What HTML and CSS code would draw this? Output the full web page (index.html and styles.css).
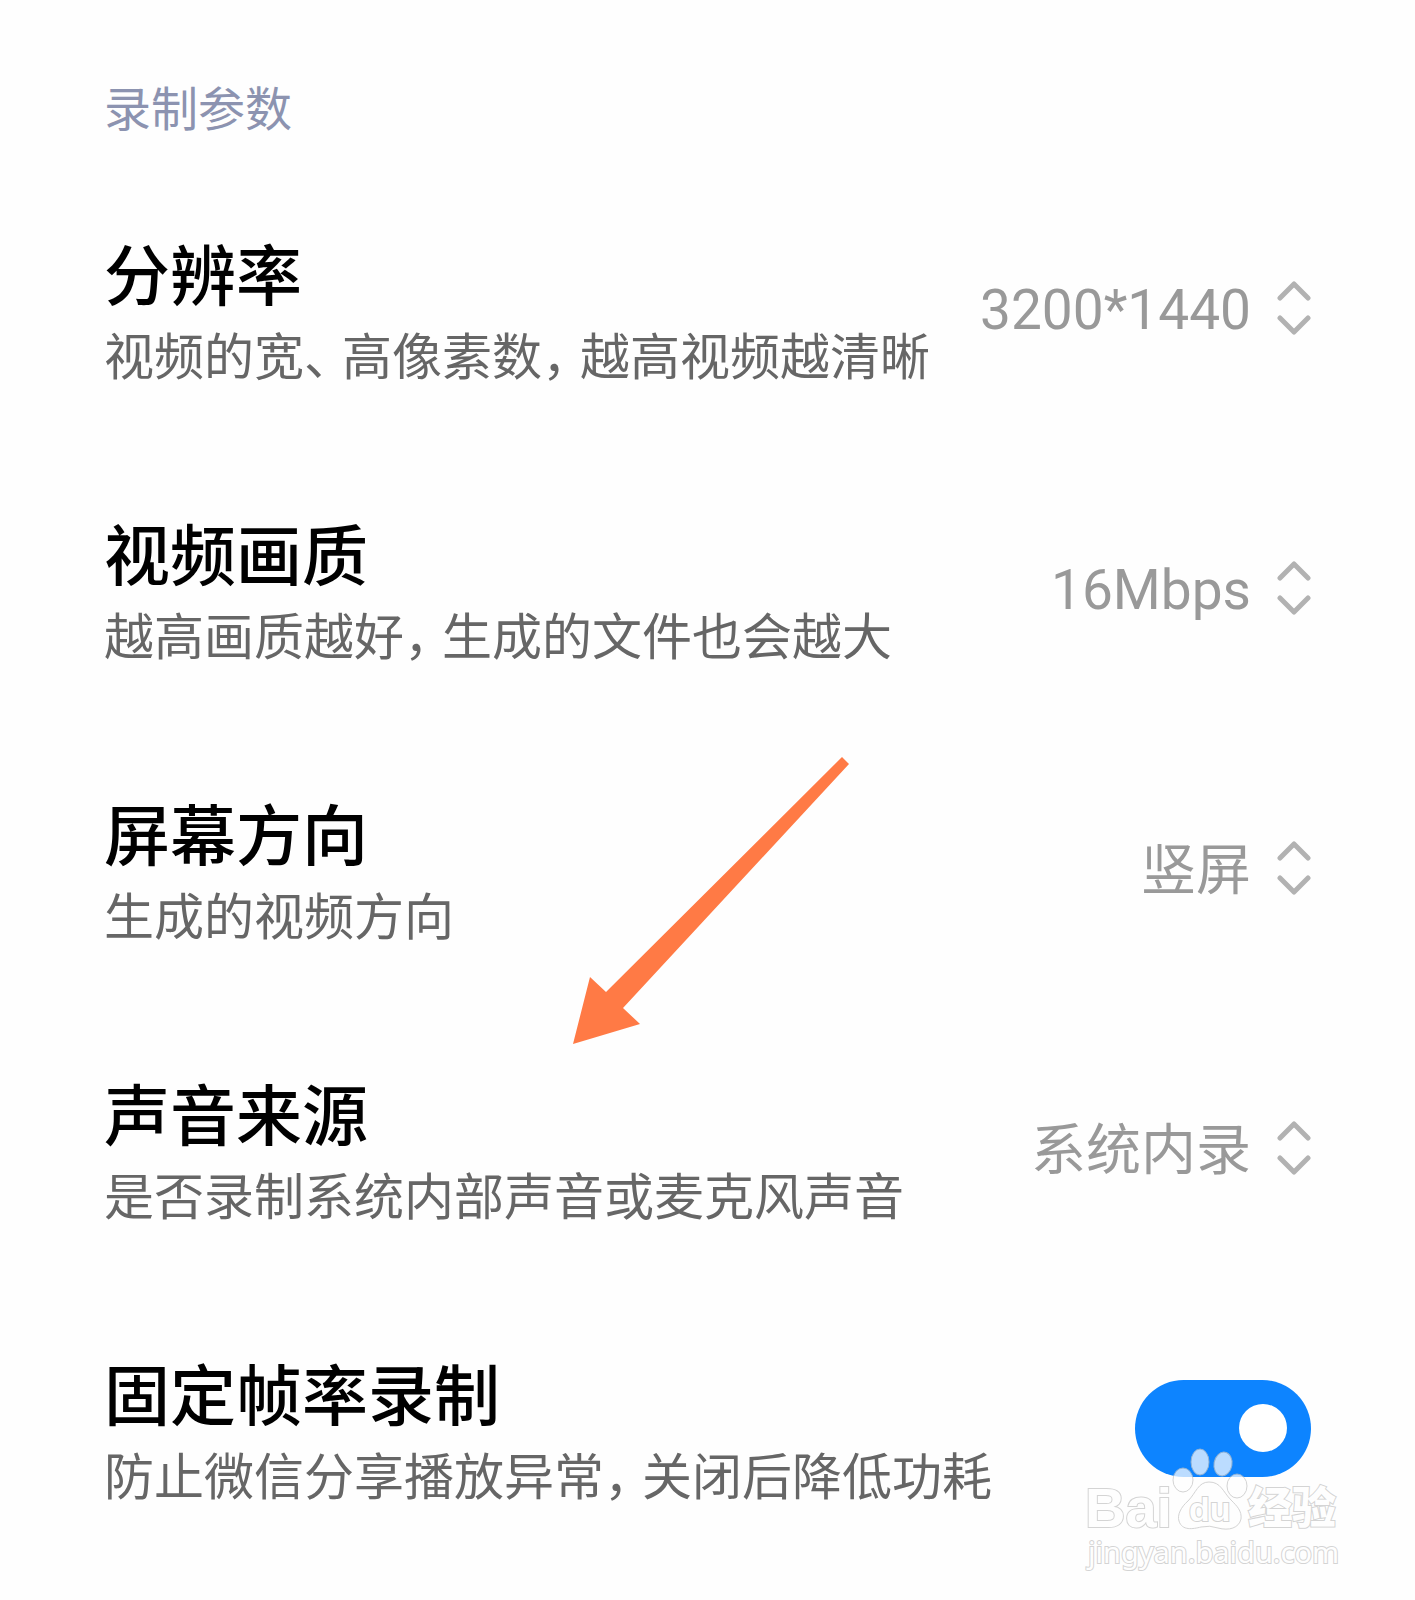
FILE: index.html
```
<!DOCTYPE html>
<html lang="zh-CN">
<head>
    <meta charset="UTF-8">
    <meta name="viewport" content="width=device-width, initial-scale=1.0">
    <title>录制参数</title>
    <link rel="stylesheet" href="styles.css">
</head>
<body>
    <svg width="0" height="0" class="defs" aria-hidden="true">
        <symbol id="icon-updown" viewBox="0 0 34 54">
            <path d="M3 17 17 3 31 17M3 37 17 51 31 37"/>
        </symbol>
    </svg>

    <main class="page">
        <h1 class="section-title">录制参数</h1>

        <!-- 分辨率 -->
        <div class="row">
            <div class="row-text">
                <label class="row-title" for="resolution">分辨率</label>
                <p class="row-desc">视频的宽<span class="punct">、</span>高像素数<span class="punct">，</span>越高视频越清晰</p>
            </div>
            <div class="picker">
                <select id="resolution">
                    <option>3200*1440</option>
                </select>
                <svg class="picker-icon"><use href="#icon-updown"/></svg>
            </div>
        </div>

        <!-- 视频画质 -->
        <div class="row">
            <div class="row-text">
                <label class="row-title" for="quality">视频画质</label>
                <p class="row-desc">越高画质越好<span class="punct">，</span>生成的文件也会越大</p>
            </div>
            <div class="picker">
                <select id="quality">
                    <option>16Mbps</option>
                </select>
                <svg class="picker-icon"><use href="#icon-updown"/></svg>
            </div>
        </div>

        <!-- 屏幕方向 -->
        <div class="row">
            <div class="row-text">
                <label class="row-title" for="orientation">屏幕方向</label>
                <p class="row-desc">生成的视频方向</p>
            </div>
            <div class="picker">
                <select id="orientation">
                    <option>竖屏</option>
                </select>
                <svg class="picker-icon"><use href="#icon-updown"/></svg>
            </div>
        </div>

        <!-- 声音来源 -->
        <div class="row">
            <div class="row-text">
                <label class="row-title" for="audio">声音来源</label>
                <p class="row-desc">是否录制系统内部声音或麦克风声音</p>
            </div>
            <div class="picker">
                <select id="audio">
                    <option>系统内录</option>
                </select>
                <svg class="picker-icon"><use href="#icon-updown"/></svg>
            </div>
        </div>

        <!-- 固定帧率录制 -->
        <div class="row">
            <div class="row-text">
                <label class="row-title" for="fixed-fps">固定帧率录制</label>
                <p class="row-desc">防止微信分享播放异常<span class="punct">，</span>关闭后降低功耗</p>
            </div>
            <input class="switch" type="checkbox" role="switch" id="fixed-fps" checked>
        </div>

        <!-- 指示箭头 -->
        <svg class="arrow" viewBox="0 0 276 288" aria-hidden="true">
            <path d="M0 287 17 220 33 235 269 0 276 7 50 251 67 267Z"/>
        </svg>

        <!-- 水印 -->
        <svg class="watermark" viewBox="0 0 265 130" role="img" aria-label="Baidu经验">
            <ellipse cx="120" cy="17" rx="9" ry="13"/>
            <ellipse cx="143" cy="19" rx="9" ry="12" transform="rotate(10 143 19)"/>
            <ellipse cx="103" cy="35" rx="10" ry="12"/>
            <ellipse cx="157" cy="41" rx="10" ry="12"/>
            <path d="M129 37C118 37 116 48 108 56C101 62 97 70 99 76C102 86 113 84 121 82Q130 80 138 83C149 86 159 83 161 74C162 66 157 61 151 55C143 47 141 37 129 37Z"/>
            <text class="wm-bai" x="5" y="82">Bai</text>
            <text class="wm-du" x="109" y="76">du</text>
            <text class="wm-cn" x="168" y="79">经验</text>
            <text class="wm-url" x="8" y="118">jingyan.baidu.com</text>
        </svg>
    </main>
</body>
</html>
```
FILE: styles.css
```
* {
    box-sizing: border-box;
}

body {
    margin: 0;
    background: #fefefe;
    font-family: Roboto, "Noto Sans CJK SC", sans-serif;
}

.defs {
    position: absolute;
}

.page {
    position: relative;
    min-height: 100vh;
    padding: 72px 104px 32px;
}

.section-title {
    margin: 0 0 28px;
    font-size: 47px;
    line-height: 68px;
    font-weight: 400;
    font-family: "Noto Sans CJK SC", sans-serif;
    color: #8c93b0;
}

/* 设置项 */
.row {
    display: flex;
    align-items: center;
    justify-content: space-between;
    gap: 24px;
    min-height: 280px;
}

.row-title {
    display: block;
    font-size: 66px;
    line-height: 88px;
    font-weight: 500;
    font-family: "Noto Sans CJK SC", sans-serif;
    color: #000;
}

.row-desc {
    margin: 2px 0 0;
    font-size: 50px;
    line-height: 72px;
    font-family: "Noto Sans CJK SC", sans-serif;
    color: #666;
    white-space: nowrap;
}

/* 标点半宽 */
.punct {
    margin-right: 13px;
    font-feature-settings: "halt";
}

/* 下拉选择 */
.picker {
    display: flex;
    align-items: center;
    gap: 26px;
}

.picker select {
    appearance: none;
    padding: 4px 0 0;
    border: 0;
    background: none;
    font-family: inherit;
    font-size: 55px;
    line-height: 80px;
    color: #999;
    text-align: right;
}

.picker-icon {
    width: 34px;
    height: 54px;
    fill: none;
    stroke: #b2b2b2;
    stroke-width: 5;
    stroke-linecap: round;
    stroke-linejoin: round;
}

/* 开关 */
.switch {
    appearance: none;
    display: flex;
    align-items: center;
    justify-content: flex-end;
    width: 176px;
    height: 97px;
    margin: 0;
    padding-right: 24px;
    border-radius: 49px;
    background: #b2b2b2;
}

.switch:checked {
    background: #0d84ff;
}

.switch::before {
    content: "";
    width: 48px;
    height: 48px;
    border-radius: 50%;
    background: #fff;
}

.arrow {
    position: absolute;
    top: 757px;
    left: 573px;
    width: 276px;
    height: 288px;
    fill: #ff7a45;
}

/* 水印 */
.watermark {
    position: absolute;
    right: 70px;
    bottom: 25px;
    width: 265px;
    height: 130px;
    fill: #fff;
    stroke: #c4c4c4;
    stroke-width: 1;
    opacity: 0.72;
    pointer-events: none;
}

.watermark text {
    stroke-width: 2;
    paint-order: stroke;
}

.wm-bai {
    font: bold 56px "Liberation Sans", sans-serif;
}

.wm-du {
    font: bold 34px "Liberation Sans", sans-serif;
}

.wm-cn {
    font: 900 44px "Noto Sans CJK SC", sans-serif;
}

.wm-url {
    font: 29px "Noto Sans", sans-serif;
}
```
